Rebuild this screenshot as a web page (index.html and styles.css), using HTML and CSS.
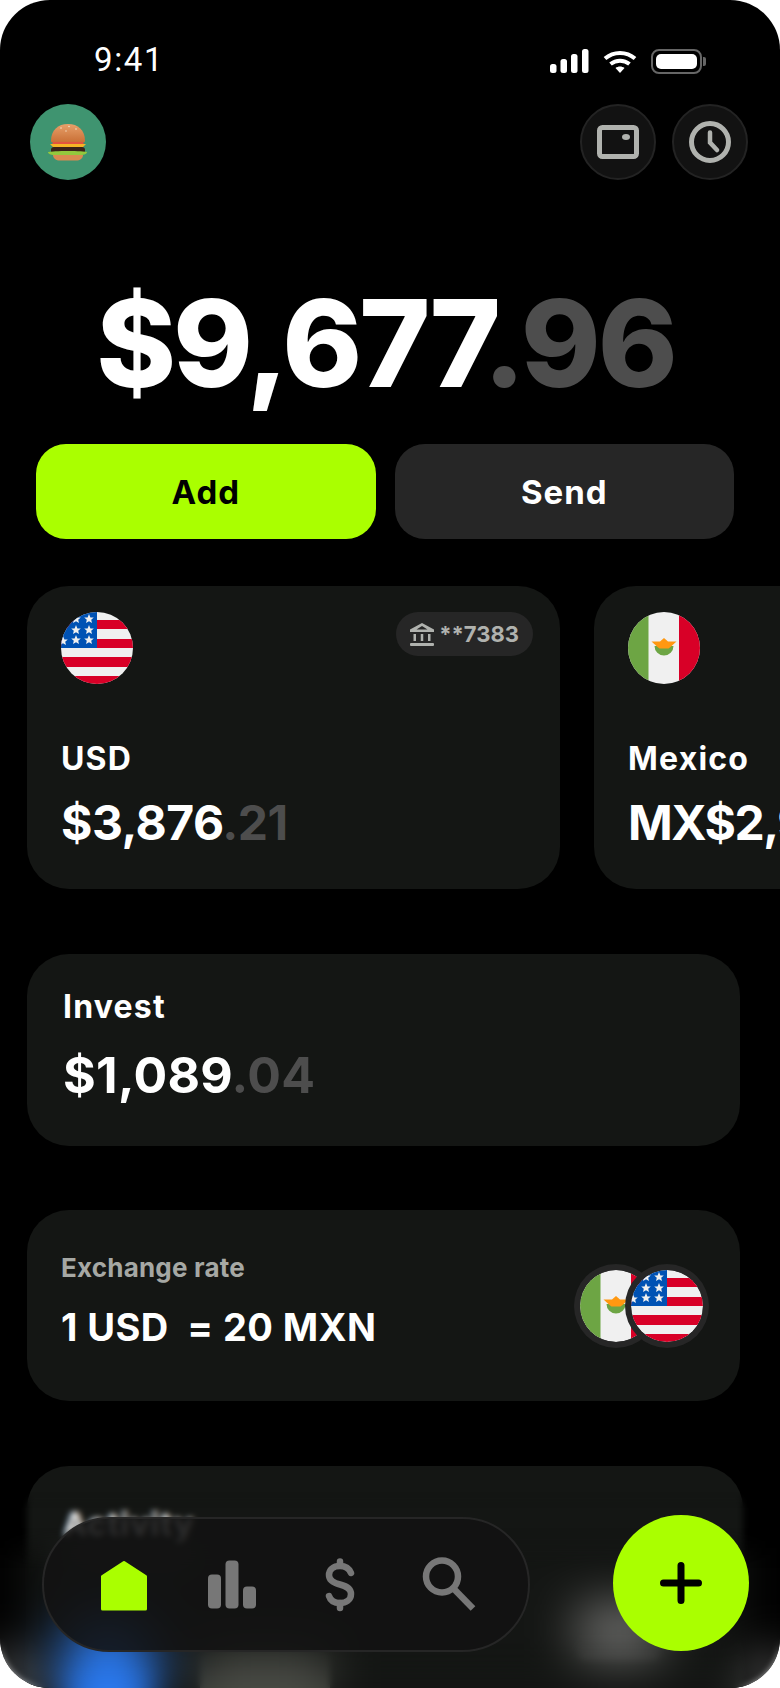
FILE: index.html

```html
<!DOCTYPE html>
<html lang="en">
<head>
  <meta charset="UTF-8" />
  <meta name="viewport" content="width=device-width, initial-scale=1.0">
  <title>Wallet</title>
  <link rel="stylesheet" href="styles.css">
</head>
<body>
  <svg class="defs" width="0" height="0" aria-hidden="true">
    <defs>
      <clipPath id="flag-clip"><circle cx="36" cy="36" r="36"/></clipPath>
      <polygon id="star" points="0,-5 1.4,-1.6 4.8,-1.5 2.2,0.7 3,4 0,2.2 -3,4 -2.2,0.7 -4.8,-1.5 -1.4,-1.6"/>
      <symbol id="flag-us" viewBox="0 0 72 72">
        <g clip-path="url(#flag-clip)">
          <rect width="72" height="72" fill="#f0f0f0"/>
          <rect y="8" width="72" height="9" fill="#d80027"/>
          <rect y="27" width="72" height="9" fill="#d80027"/>
          <rect y="45" width="72" height="10" fill="#d80027"/>
          <rect y="64" width="72" height="8" fill="#d80027"/>
          <rect width="36" height="36" fill="#0052b4"/>
          <g fill="#f0f0f0">
            <use href="#star" x="28" y="7"/>
            <use href="#star" x="15" y="7"/>
            <use href="#star" x="15" y="18"/>
            <use href="#star" x="28" y="18"/>
            <use href="#star" x="2" y="29"/>
            <use href="#star" x="15" y="28"/>
            <use href="#star" x="28" y="28"/>
          </g>
        </g>
      </symbol>
      <symbol id="flag-mx" viewBox="0 0 72 72">
        <g clip-path="url(#flag-clip)">
          <rect width="72" height="72" fill="#f0f0f0"/>
          <rect width="20.500" height="72" fill="#6da544"/>
          <rect x="51" width="21" height="72" fill="#d80027"/>
          <path d="M26.500 34a9.500 9.500 0 0 0 19 0z" fill="#6da544"/>
          <path d="M23.500 29.500h8.500l4-3.500 4 3.500h8.500l-6 5.500-2 1.500h-9l-2-1.500z" fill="#ff9811"/>
        </g>
      </symbol>
    </defs>
  </svg>

  <div class="phone">
    <div class="status-bar">
      <span class="time">9:41</span>
      <div class="status-icons">
        <svg width="39" height="25" viewBox="0 0 39 25" fill="#fff">
          <rect x="0" y="15" width="6.500" height="9" rx="2.500"/>
          <rect x="10.500" y="10" width="6.500" height="14" rx="2.500"/>
          <rect x="21" y="5" width="6.500" height="19" rx="2.500"/>
          <rect x="32" y="0" width="6.500" height="24" rx="2.500"/>
        </svg>
        <svg width="34" height="25" viewBox="0 0 34 25" fill="none" stroke="#fff" stroke-width="4">
          <path d="M2 9.500c8.500-7.500 21.500-7.500 30 0"/>
          <path d="M7.500 15c5.500-4.500 13.500-4.500 19 0"/>
          <path d="M12.500 19l4.500 5 4.500-5c-2.500-2-6.500-2-9 0z" fill="#fff" stroke="none"/>
        </svg>
        <div class="battery"><span class="battery-level"></span></div>
      </div>
    </div>

    <header class="top-row">
      <div class="avatar">
        <svg width="40" height="40" viewBox="0 0 40 40">
          <defs>
            <linearGradient id="bun-top" x1="0" y1="0" x2="0" y2="1">
              <stop offset="0" stop-color="#e7a06a"/>
              <stop offset="1" stop-color="#c96f35"/>
            </linearGradient>
          </defs>
          <path d="M3 19c0-11 7-17 17-17s17 6 17 17c0 1-1 1.500-2 1.500H5c-1 0-2-.5-2-1.500z" fill="url(#bun-top)"/>
          <g fill="#f3e3c8"><circle cx="13" cy="6" r=".8"/><circle cx="21" cy="4.500" r=".8"/><circle cx="28" cy="7" r=".8"/><circle cx="18" cy="9" r=".7"/></g>
          <path d="M5 20h30l1 2.500H4z" fill="#e2533f"/>
          <path d="M2 22h36l-3 3-6 3-6-3H5z" fill="#f5b325"/>
          <rect x="3" y="25" width="34" height="6.500" rx="3" fill="#3a2118"/>
          <path d="M1 30c2-1.500 36-1.500 38 0 0 2-3 3-6 3l-3 1-3-1-4 1-3-1-4 1-3-1-3 1-4-1c-3 0-6-1-6-3z" fill="#93c83d"/>
          <path d="M5 33h30c0 3.500-3 5.500-7 5.500H12c-4 0-7-2-7-5.500z" fill="#d98a50"/>
        </svg>
      </div>
      <div class="top-actions">
        <button class="round-btn">
          <svg width="42" height="34" viewBox="0 0 42 34">
            <rect x="2.500" y="2.500" width="37" height="29" rx="3" fill="none" stroke="#b0b2ae" stroke-width="5"/>
            <ellipse cx="29" cy="12" rx="4" ry="3" fill="#b0b2ae"/>
          </svg>
        </button>
        <button class="round-btn">
          <svg width="42" height="42" viewBox="0 0 42 42" fill="none" stroke="#b0b2ae">
            <circle cx="21" cy="21" r="18.500" stroke-width="5"/>
            <path d="M21 11.500v10l7 7.500" stroke-width="4.500" stroke-linecap="round"/>
          </svg>
        </button>
      </div>
    </header>

    <div class="balance">$9,677<span class="cents">.96</span></div>

    <div class="actions">
      <button class="action action-add">Add</button>
      <button class="action action-send">Send</button>
    </div>

    <div class="accounts">
      <div class="card account">
        <div class="account-top">
          <svg class="flag"><use href="#flag-us"/></svg>
          <div class="pill">
            <svg width="24" height="23" viewBox="0 0 24 23" fill="#b0b2ae">
              <path d="M12 0L24 6.500V9H0V6.500zM12 3L6.500 6.500h11z" fill-rule="evenodd"/>
              <rect x="3.500" y="11" width="2.500" height="7"/>
              <rect x="10.750" y="11" width="2.500" height="7"/>
              <rect x="18" y="11" width="2.500" height="7"/>
              <rect x="0" y="20" width="24" height="3" rx="1"/>
            </svg>
            <span>**7383</span>
          </div>
        </div>
        <div class="card-title">USD</div>
        <div class="amount">$3,876<span class="amount-cents">.21</span></div>
      </div>
      <div class="card account">
        <div class="account-top">
          <svg class="flag"><use href="#flag-mx"/></svg>
        </div>
        <div class="card-title">Mexico</div>
        <div class="amount amount-tight">MX$2,940<span class="amount-cents">.50</span></div>
      </div>
    </div>

    <div class="card invest">
      <div class="card-title">Invest</div>
      <div class="amount amount-wide">$1,089<span class="amount-cents">.04</span></div>
    </div>

    <div class="card exchange">
      <div class="exchange-text">
        <div class="exchange-label">Exchange rate</div>
        <div class="exchange-value">1 USD&nbsp; = 20 MXN</div>
      </div>
      <div class="exchange-flags">
        <svg class="flag flag-ringed"><use href="#flag-mx"/></svg>
        <svg class="flag flag-ringed flag-over"><use href="#flag-us"/></svg>
      </div>
    </div>

    <div class="card activity">
      <div class="card-title">Activity</div>
      <div class="activity-row">
        <div class="activity-icon"></div>
        <div class="activity-name"></div>
        <div class="activity-sum"></div>
      </div>
    </div>

    <!-- blurred strips under the tab bar -->
    <div class="veil"></div>
    <div class="veil veil-deep"></div>

    <div class="tabbar">
      <nav class="nav-pill">
        <a class="nav-item">
          <svg width="60" height="60" viewBox="0 0 60 60">
            <path d="M30 8.500L51.500 22.500V55H8.500V22.500z" fill="#aaff00" stroke="#aaff00" stroke-width="3" stroke-linejoin="round"/>
          </svg>
        </a>
        <a class="nav-item">
          <svg width="60" height="60" viewBox="0 0 60 60" fill="#777">
            <rect x="6" y="20.500" width="13" height="34" rx="4"/>
            <rect x="23.500" y="6.500" width="13" height="48" rx="4"/>
            <rect x="41" y="32.500" width="13" height="22" rx="4"/>
          </svg>
        </a>
        <a class="nav-item">
          <svg width="60" height="60" viewBox="0 0 60 60" fill="none" stroke="#777" stroke-width="6.500" stroke-linecap="round">
            <path d="M41 19C39 14 35 12 30 12C23 12 19 16 19 21C19 27 24 29 30 30.500C36 32 41 35 41 40C41 46 36 49 30 49C25 49 20.500 47 19 42"/>
            <path d="M30 7.500v4M30 49v5"/>
          </svg>
        </a>
        <a class="nav-item">
          <svg width="60" height="60" viewBox="0 0 60 60" fill="none" stroke="#777" stroke-width="6.500">
            <circle cx="24" cy="22.500" r="16"/>
            <path d="M35 34L55 54.500"/>
          </svg>
        </a>
      </nav>
      <button class="fab">
        <svg width="42" height="42" viewBox="0 0 42 42" stroke="#000" stroke-width="7" stroke-linecap="round">
          <path d="M21 3.500v35M3.500 21h35"/>
        </svg>
      </button>
    </div>
  </div>
</body>
</html>
```

FILE: styles.css

```css
* {
  box-sizing: border-box;
}
body {
  margin: 0;
  background: #fff;
  font-family: Inter, "Liberation Sans", sans-serif;
  color: #fff;
}
button {
  font-family: inherit;
  border: none;
  padding: 0;
}
.defs {
  position: absolute;
}
.phone {
  position: relative;
  width: 780px;
  height: 1688px;
  background: #000;
  border-radius: 50px;
  overflow: hidden;
}

/* status bar */
.status-bar {
  display: flex;
  justify-content: space-between;
  align-items: center;
  height: 104px;
  padding: 18px 78px 0 94px;
}
.time {
  font-family: Roboto, sans-serif;
  font-weight: 400;
  font-size: 33px;
  line-height: 38px;
  letter-spacing: 1.6px;
  margin-top: -2px;
}
.status-icons {
  display: flex;
  align-items: center;
  gap: 14px;
}
.battery {
  position: relative;
  width: 51px;
  height: 25px;
  padding: 3px;
  border: 2px solid #666;
  border-radius: 8px;
}
.battery::after {
  content: "";
  position: absolute;
  right: -6px;
  top: 6px;
  width: 3px;
  height: 9px;
  background: #666;
  border-radius: 0 2px 2px 0;
}
.battery-level {
  display: block;
  height: 100%;
  background: #fff;
  border-radius: 5px;
}

/* header */
.top-row {
  display: flex;
  justify-content: space-between;
  padding: 0 32px 0 30px;
}
.avatar {
  width: 76px;
  height: 76px;
  border-radius: 50%;
  background: #3f9470;
  display: flex;
  align-items: center;
  justify-content: center;
}
.top-actions {
  display: flex;
  gap: 16px;
}
.round-btn {
  width: 76px;
  height: 76px;
  border-radius: 50%;
  background: #121212;
  border: 2px solid #232323;
  display: flex;
  align-items: center;
  justify-content: center;
}

/* balance */
.balance {
  margin-top: 90px;
  padding-right: 9px;
  text-align: center;
  font-size: 121px;
  line-height: 146px;
  font-weight: 760;
  letter-spacing: -3px;
  height: 146px;
}
.cents {
  color: #4d4d4d;
}
.actions {
  display: flex;
  gap: 19px;
  margin-top: 28px;
  padding: 0 46px 0 36px;
}
.action {
  flex: 1;
  height: 95px;
  border-radius: 30px;
  font-size: 33px;
  font-weight: 700;
  letter-spacing: 1px;
}
.action-add {
  background: #aaff00;
  color: #000;
}
.action-send {
  background: #262626;
  color: #fff;
}

/* cards */
.card {
  background: #141614;
  border-radius: 42px;
}
.accounts {
  display: flex;
  gap: 34px;
  margin-top: 47px;
  padding-left: 27px;
}
.account {
  flex: none;
  width: 533px;
  height: 303px;
  padding: 26px 27px 0 34px;
}
.account-top {
  display: flex;
  justify-content: space-between;
  align-items: flex-start;
  height: 72px;
  margin-bottom: 56px;
}
.flag {
  width: 72px;
  height: 72px;
  flex: none;
}
.pill {
  display: flex;
  align-items: center;
  gap: 5px;
  height: 44px;
  padding: 0 14px;
  border-radius: 22px;
  background: #262626;
  color: #b0b2ae;
  font-size: 22px;
  font-weight: 700;
}
.card-title {
  font-size: 32px;
  line-height: 38px;
  font-weight: 700;
  letter-spacing: 1.2px;
}
.amount {
  margin-top: 16px;
  font-size: 48px;
  line-height: 58px;
  font-weight: 700;
  letter-spacing: -0.5px;
  white-space: nowrap;
}
.amount-tight {
  letter-spacing: -1.5px;
}
.amount-wide {
  margin-top: 20px;
  font-size: 50px;
  letter-spacing: 0.3px;
}
.amount-cents {
  color: #4d4d4d;
}
.invest {
  margin: 65px 40px 0 27px;
  height: 192px;
  padding: 34px 36px 0;
}
.exchange {
  margin: 64px 40px 0 27px;
  height: 191px;
  padding: 0 31px 0 34px;
  display: flex;
  justify-content: space-between;
  align-items: center;
}
.exchange-text {
  padding-bottom: 10px;
}
.exchange-label {
  font-size: 26px;
  line-height: 30px;
  font-weight: 700;
  letter-spacing: 0.2px;
  color: #a6a8a4;
}
.exchange-value {
  margin-top: 22px;
  font-size: 38px;
  line-height: 44px;
  font-weight: 700;
  letter-spacing: 0.4px;
}
.exchange-flags {
  display: flex;
}
.flag-ringed {
  width: 84px;
  height: 84px;
  padding: 6px;
  background: #262626;
  border-radius: 50%;
}
.flag-over {
  margin-left: -33px;
}
.activity {
  margin: 65px 37px 0 27px;
  height: 340px;
  padding: 40px 36px 0;
}
.activity-row {
  display: flex;
  align-items: center;
  margin-top: 72px;
}
.activity-icon {
  width: 96px;
  height: 110px;
  margin: 0 14px 0 -3px;
  border-radius: 50%;
  background: #2b7cf5;
  filter: blur(14px);
  flex: none;
}
.activity-name {
  width: 130px;
  height: 50px;
  margin: 10px 0 0 30px;
  background: #4a4c46;
  border-radius: 8px;
}
.activity-sum {
  width: 84px;
  height: 56px;
  margin: -80px 46px 0 auto;
  background: #6a6a68;
  border-radius: 8px;
}
.veil {
  position: absolute;
  left: 0;
  right: 0;
  bottom: 0;
  height: 196px;
  backdrop-filter: blur(3px);
  -webkit-mask-image: linear-gradient(to bottom, transparent 0, #000 16px);
  mask-image: linear-gradient(to bottom, transparent 0, #000 16px);
}
.veil-deep {
  height: 160px;
  backdrop-filter: blur(24px);
  -webkit-mask-image: linear-gradient(to bottom, transparent 0, #000 40px);
  mask-image: linear-gradient(to bottom, transparent 0, #000 40px);
}

/* tab bar */
.tabbar {
  position: absolute;
  left: 42px;
  right: 31px;
  bottom: 35px;
  display: flex;
  justify-content: space-between;
  align-items: center;
}
.nav-pill {
  display: flex;
  width: 488px;
  height: 135px;
  padding-left: 26px;
  align-items: center;
  border: 2px solid #262626;
  border-radius: 68px;
  background: rgba(18, 18, 18, 0.88);
}
.nav-item {
  flex: none;
  width: 108px;
  display: flex;
  justify-content: center;
}
.fab {
  width: 136px;
  height: 136px;
  margin-bottom: 2px;
  border-radius: 50%;
  background: #aaff00;
  display: flex;
  align-items: center;
  justify-content: center;
}
```
